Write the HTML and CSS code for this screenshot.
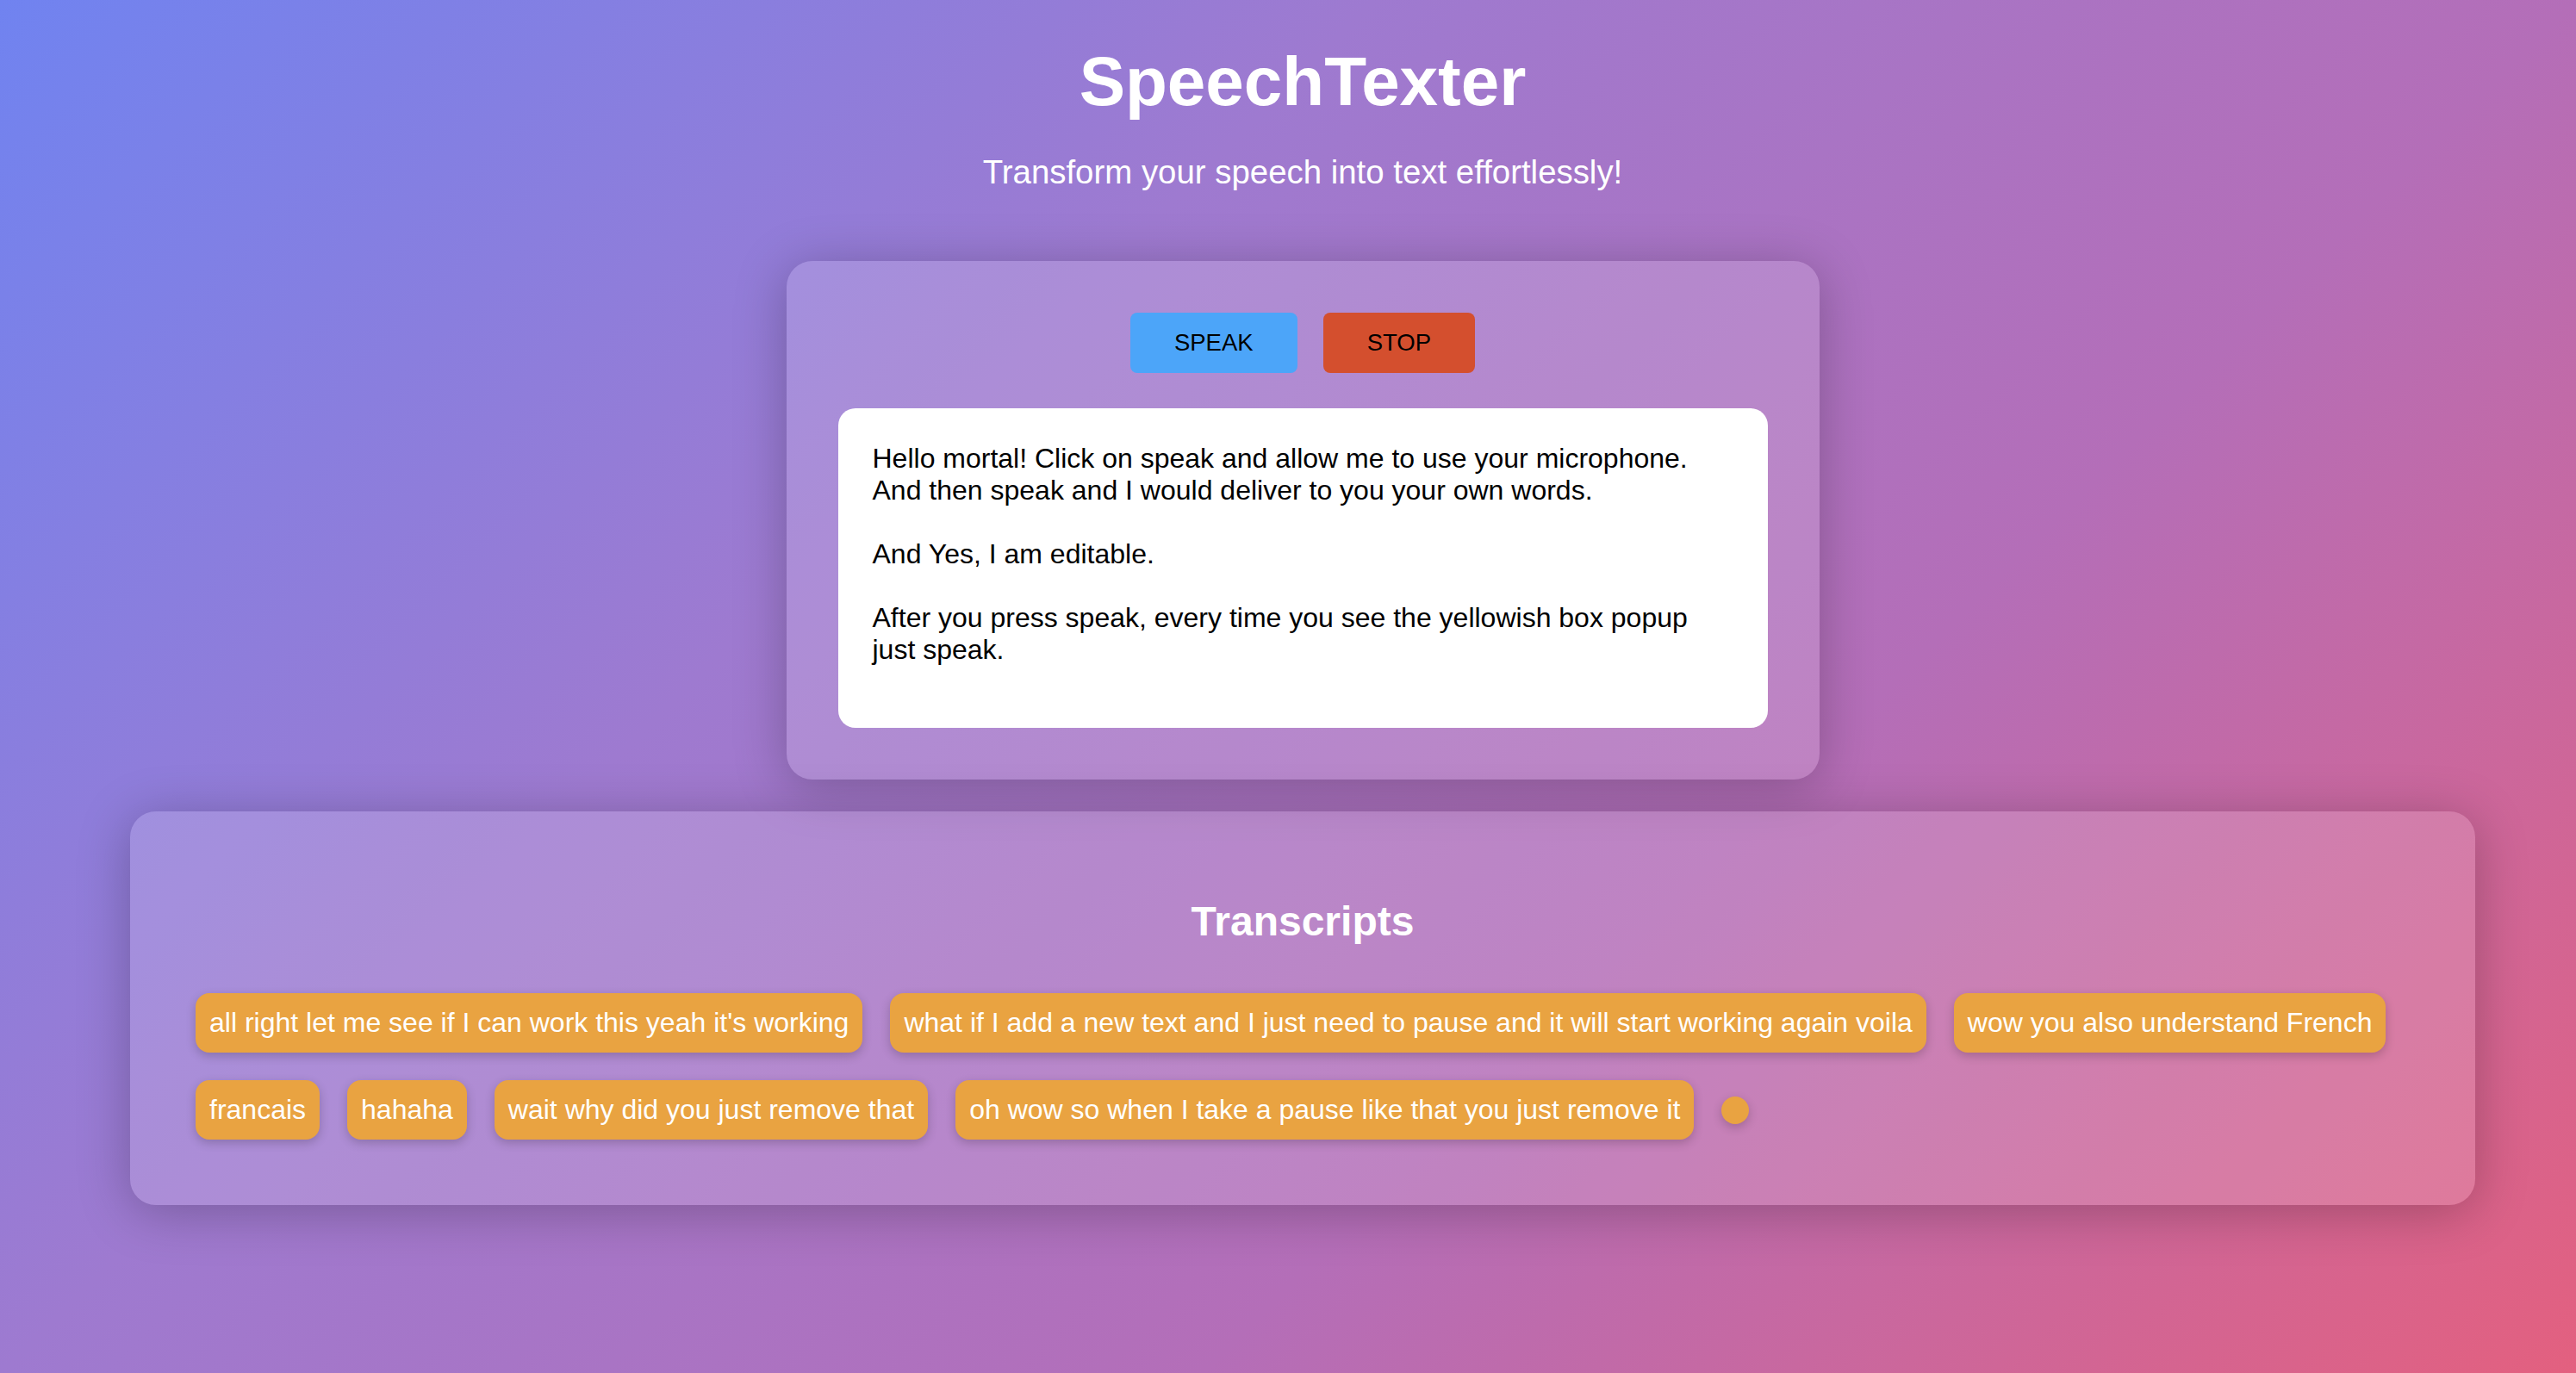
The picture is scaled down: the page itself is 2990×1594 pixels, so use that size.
FILE: index.html
```html
<!DOCTYPE html>
<html lang="en">
<head>
<meta charset="utf-8">
<title>SpeechTexter</title>
<link rel="stylesheet" href="styles.css">
</head>
<body>
<div class="page">
  <header class="hero">
    <h1 class="title">SpeechTexter</h1>
    <p class="tagline">Transform your speech into text effortlessly!</p>
  </header>

  <section class="panel">
    <div class="controls">
      <button class="btn btn-speak" type="button">SPEAK</button>
      <button class="btn btn-stop" type="button">STOP</button>
    </div>
    <div class="editor" contenteditable="true">Hello mortal! Click on speak and allow me to use your microphone. And then speak and I would deliver to you your own words.

And Yes, I am editable.

After you press speak, every time you see the yellowish box popup just speak.</div>
  </section>

  <section class="transcripts">
    <h2 class="transcripts-title">Transcripts</h2>
    <div class="chips">
      <span class="chip">all right let me see if I can work this yeah it's working</span>
      <span class="chip">what if I add a new text and I just need to pause and it will start working again voila</span>
      <span class="chip">wow you also understand French</span>
      <span class="chip">francais</span>
      <span class="chip">hahaha</span>
      <span class="chip">wait why did you just remove that</span>
      <span class="chip">oh wow so when I take a pause like that you just remove it</span>
      <span class="chip"></span>
    </div>
  </section>
</div>
</body>
</html>
```

FILE: styles.css
```css
html {
  min-height: 100%;
  background: linear-gradient(135deg, #7083f0 0%, #9e7ad0 34.8%, #b46eb8 65.2%, #e3607f 100%);
}

body {
  margin: 0;
  min-height: 100vh;
  font-family: "Liberation Sans", Arial, Helvetica, sans-serif;
  color: #fff;
}

.page {
  padding: 49px 0 120px 34px;
}

.hero {
  text-align: center;
}

.title {
  margin: 0;
  font-size: 80px;
  font-weight: bold;
  line-height: normal;
}

.tagline {
  margin: 37px 0 0;
  font-size: 38.4px;
  line-height: normal;
}

.panel {
  box-sizing: border-box;
  width: 1199px;
  margin: 81px auto 0;
  padding: 60px;
  background: rgba(255, 255, 255, 0.15);
  border-radius: 30px;
  box-shadow: 0 8px 60px rgba(0, 0, 0, 0.25);
}

.controls {
  display: flex;
  justify-content: center;
  gap: 30px;
}

.btn {
  font-family: inherit;
  font-size: 27.5px;
  line-height: normal;
  height: 70px;
  padding: 0 51px;
  border: none;
  border-radius: 8px;
  color: #000;
  cursor: pointer;
}

.btn-speak {
  background: #4ca5f9;
}

.btn-stop {
  background: #d44f2e;
}

.editor {
  box-sizing: border-box;
  margin-top: 41px;
  height: 371px;
  padding: 40px;
  background: #fff;
  border-radius: 20px;
  color: #000;
  font-size: 32px;
  line-height: normal;
  white-space: pre-wrap;
  outline: none;
}

.transcripts {
  margin: 37px 117px 0;
  padding: 60px;
  background: rgba(255, 255, 255, 0.15);
  border-radius: 30px;
  box-shadow: 0 8px 60px rgba(0, 0, 0, 0.25);
}

.transcripts-title {
  margin: 40px 0;
  text-align: center;
  font-size: 48px;
  font-weight: bold;
  line-height: normal;
}

.chips {
  display: flex;
  flex-wrap: wrap;
  align-items: center;
}

.chip {
  margin: 16px;
  padding: 16px;
  background: #e9a341;
  border-radius: 16px;
  color: #fff;
  font-size: 32px;
  line-height: normal;
  box-shadow: 0 4px 12px rgba(0, 0, 0, 0.2);
}
```
